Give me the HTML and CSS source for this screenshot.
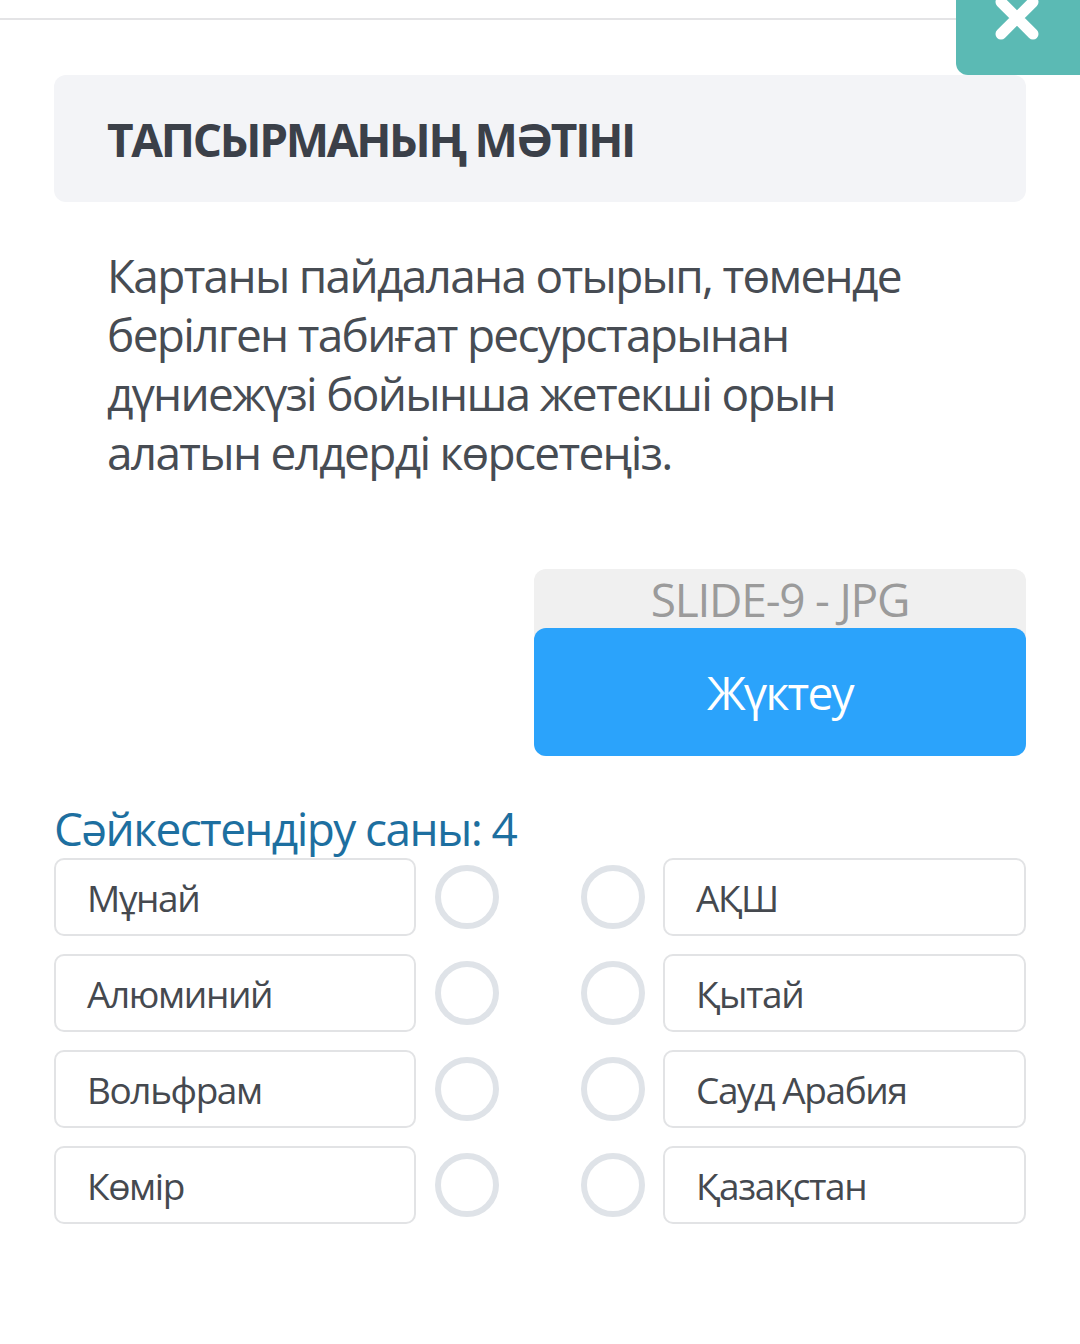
FILE: index.html
```html
<!DOCTYPE html>
<html lang="kk">
<head>
<meta charset="utf-8">
<title>Тапсырма</title>
<link rel="stylesheet" href="styles.css">
</head>
<body>
<div class="topbar">
  <div class="topline"></div>
  <button class="close" aria-label="Жабу">
    <svg width="48" height="48" viewBox="0 0 48 48"><path d="M8 8 L40 40 M40 8 L8 40" stroke="#fff" stroke-width="11" stroke-linecap="round"/></svg>
  </button>
</div>
<div class="header"><h1 class="title">ТАПСЫРМАНЫҢ МӘТІНІ</h1></div>
<p class="task">Картаны пайдалана отырып, төменде берілген табиғат ресурстарынан дүниежүзі бойынша жетекші орын алатын елдерді көрсетеңіз.</p>
<div class="filerow">
  <div class="file">
    <div class="filename">SLIDE-9 - JPG</div>
    <button class="download">Жүктеу</button>
  </div>
</div>
<div class="count">Сәйкестендіру саны: 4</div>
<div class="match">
  <div class="row"><div class="item">Мұнай</div><span class="dot dot-l"></span><span class="dot dot-r"></span><div class="item item-r">АҚШ</div></div>
  <div class="row"><div class="item">Алюминий</div><span class="dot dot-l"></span><span class="dot dot-r"></span><div class="item item-r">Қытай</div></div>
  <div class="row"><div class="item">Вольфрам</div><span class="dot dot-l"></span><span class="dot dot-r"></span><div class="item item-r">Сауд Арабия</div></div>
  <div class="row"><div class="item">Көмір</div><span class="dot dot-l"></span><span class="dot dot-r"></span><div class="item item-r">Қазақстан</div></div>
</div>
</body>
</html>
```
FILE: styles.css
```css
* { box-sizing: border-box; }
html, body { margin: 0; padding: 0; background: #fff; }
body { font-family: "Open Sans", "Noto Sans", sans-serif; color: #454a52; width: 1080px; }

.topbar { display: flex; height: 75px; }
.topline { flex: 1; height: 2px; margin-top: 18px; background: #e4e4e6; }
.close {
  width: 124px; height: 75px; border: 0; padding: 0;
  background: #5bbab4; border-bottom-left-radius: 12px;
  display: flex; align-items: flex-start; justify-content: center; overflow: hidden;
}
.close svg { margin-top: -6px; margin-left: -2px; }

.header {
  margin: 0 54px; height: 127px; background: #f3f4f7; border-radius: 12px;
  display: flex; align-items: center; padding-left: 53px;
}
.title { margin: 0; font-size: 46px; font-weight: 700; color: #3b4049; letter-spacing: -2.3px; }

.task {
  margin: 44px 54px 0 107px; font-size: 46px; line-height: 59px; color: #474c53;
  letter-spacing: -1.7px; padding-right: 60px;
}

.filerow { display: flex; justify-content: flex-end; margin: 87px 54px 0 54px; }
.file { width: 492px; background: #f0f0f0; border-radius: 12px; }
.filename {
  height: 59px; text-align: center; font-size: 46px; line-height: 60px; color: #9b9b9b;
  letter-spacing: -1.2px;
}
.download {
  display: block; width: 100%; height: 128px; border: 0; border-radius: 12px;
  background: #2ba3fb; color: #fff; font-family: inherit; font-size: 46px; letter-spacing: -1.7px;
  padding: 0;
}

.count {
  margin: 47px 54px 0 54px; font-size: 46px; line-height: 50px; color: #1d6fa0;
  letter-spacing: -1.6px;
}

.match { margin: 5px 54px 0 54px; display: flex; flex-direction: column; gap: 18px; }
.row { display: flex; align-items: center; height: 78px; }
.item {
  flex: none; width: 362px; height: 78px; border: 2px solid #e2e3e5; border-radius: 10px;
  display: flex; align-items: center; padding-left: 31px; font-size: 37px; color: #45494f;
  letter-spacing: -1.4px;
}
.item-r { width: 363px; margin-left: 18px; }
.dot {
  flex: none; width: 64px; height: 64px; border: 6px solid #dfe3e8; border-radius: 50%;
}
.dot-l { margin-left: 19px; }
.dot-r { margin-left: 82px; }
```
